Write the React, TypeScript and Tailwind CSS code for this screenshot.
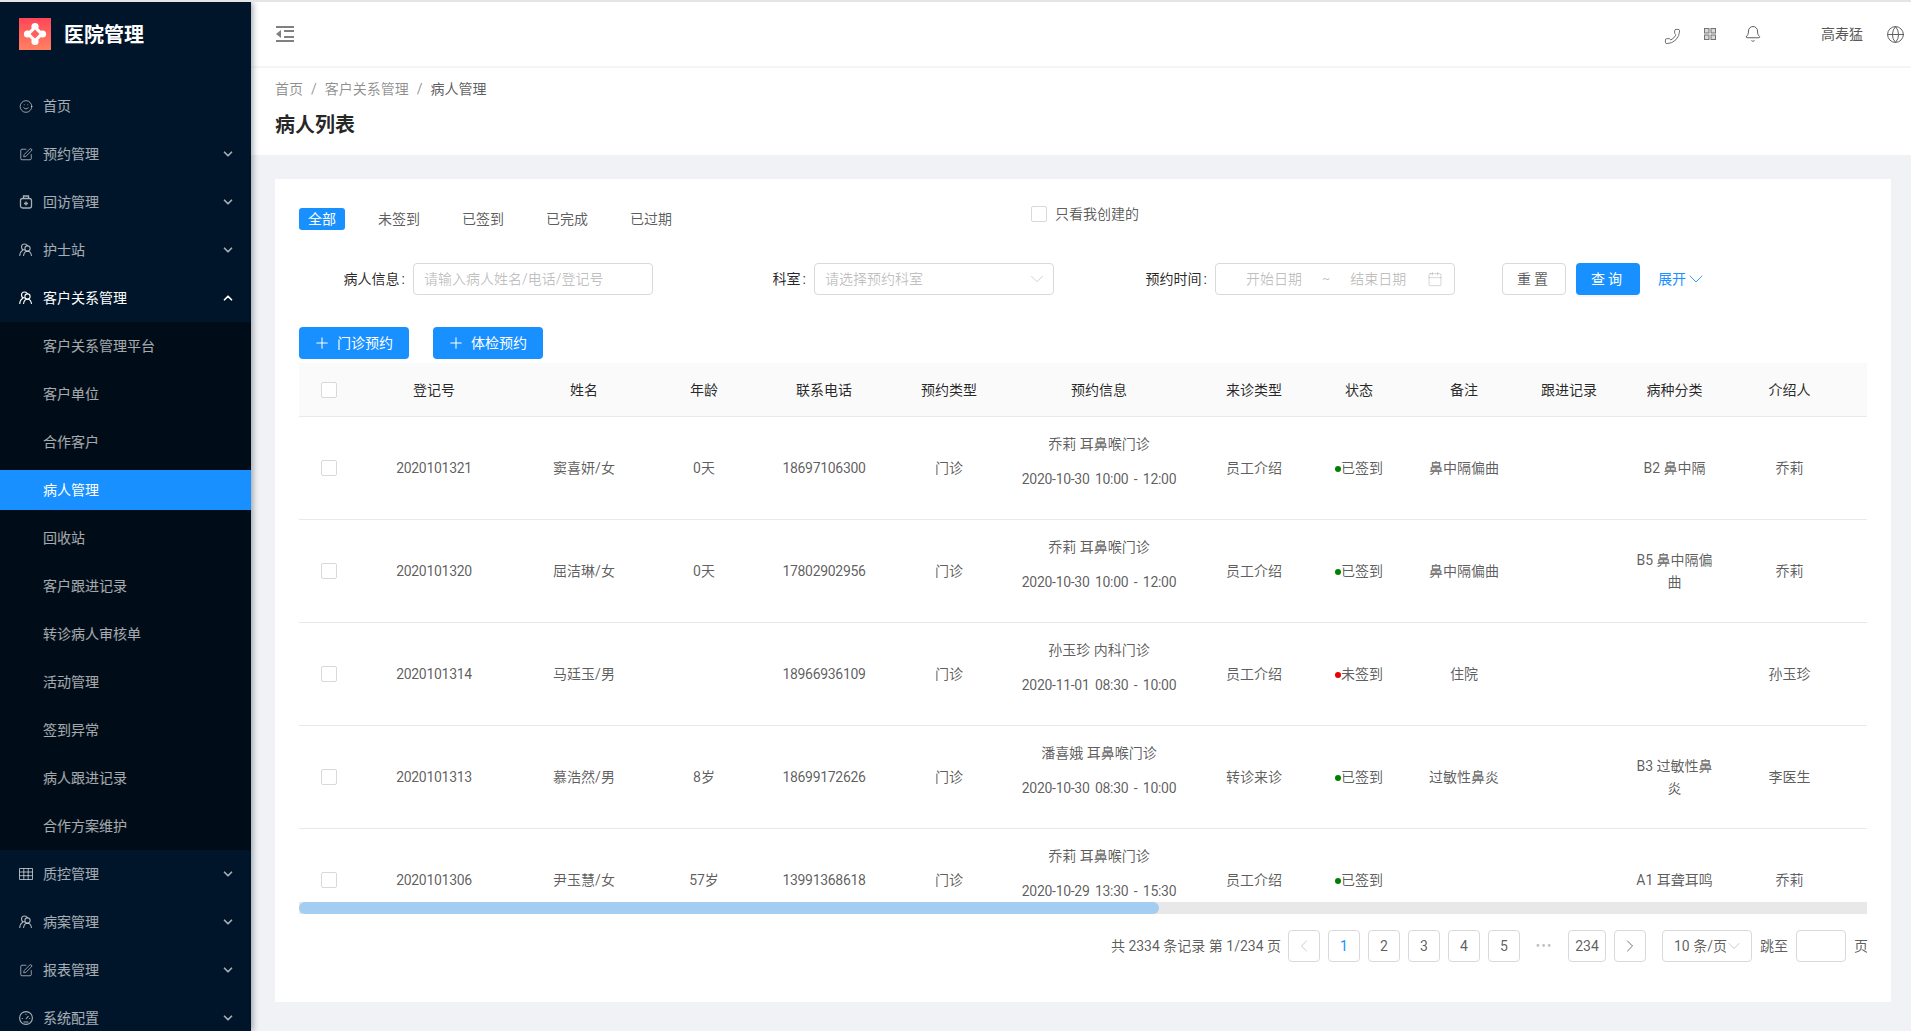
import { Bell, Calendar, ChevronDown, ChevronLeft, ChevronRight, ChevronUp, Globe, Phone, Plus, Smile, SquarePen } from "lucide-react";
import type { ReactNode } from "react";

function LogoMark() {
  return (
    <div className="w-8 h-8 bg-gradient-to-b from-[#ff4458] to-[#ff8062] flex items-center justify-center">
      <svg width="24" height="24" viewBox="0 0 24 24" fill="#fff">
        <circle cx="12" cy="4.5" r="3.6" />
        <circle cx="19.5" cy="12" r="3.6" />
        <circle cx="12" cy="19.5" r="3.6" />
        <circle cx="4.5" cy="12" r="3.6" />
        <path d="M12 3 21 12 12 21 3 12Z" />
        <path d="M12 7.5 16.5 12 12 16.5 7.5 12Z" fill="#ff5f5c" />
      </svg>
    </div>
  );
}

function UsersIcon() {
  return (
    <svg width="14" height="14" viewBox="0 0 14 14" fill="none" stroke="currentColor" strokeWidth="1.1">
      <circle cx="5.5" cy="4" r="3" />
      <path d="M.7 13c.2-3 1.600-5 3.200-6" />
      <circle cx="8.500" cy="5.500" r="2.600" fill="#001529" />
      <path d="M4.500 13c.3-2.800 2-4.800 4-4.800s3.700 2 4 4.800" />
    </svg>
  );
}

function BottleIcon() {
  return (
    <svg width="14" height="14" viewBox="0 0 14 14" fill="none" stroke="currentColor" strokeWidth="1.3">
      <path d="M4.500 3V1h5v2" />
      <rect x="1.500" y="3.500" width="11" height="9.500" rx="2" />
      <path d="M5 8.500h4M7 6.500v4" />
    </svg>
  );
}

function TableIcon() {
  return (
    <svg width="14" height="14" viewBox="0 0 14 14" fill="none" stroke="currentColor" strokeWidth="1">
      <path d="M.5 1.500h13v11H.5zM.5 5h13M.5 8.700h13M4.800 1.500v11M9.200 1.500v11" />
    </svg>
  );
}

function GaugeIcon() {
  return (
    <svg width="14" height="14" viewBox="0 0 14 14" fill="none" stroke="currentColor" strokeWidth="1.1">
      <circle cx="7" cy="7" r="6.400" />
      <path d="M2.800 7.500h1M10.200 7.500h1M7 2.800v1M7 8l2.500-3M4.500 11h5" />
    </svg>
  );
}

function FoldIcon() {
  return (
    <svg width="18" height="16" viewBox="0 0 18 16" fill="#808080">
      <rect x="0" y="0" width="18" height="2" />
      <rect x="8" y="4" width="10" height="2" />
      <rect x="8" y="10" width="10" height="2" />
      <rect x="0" y="14" width="18" height="2" />
      <path d="M5 4v8L0 8Z" />
    </svg>
  );
}

function AppsIcon() {
  return (
    <svg width="12" height="12" viewBox="0 0 12 12" fill="#d9d9d9" stroke="#737373" strokeWidth="1">
      <rect x=".5" y=".5" width="4.500" height="4.500" />
      <rect x="7" y=".5" width="4.500" height="4.500" />
      <rect x=".5" y="7" width="4.500" height="4.500" />
      <rect x="7" y="7" width="4.500" height="4.500" />
    </svg>
  );
}

const smallIcon = "w-[17px] h-[17px]";

function MenuRow({ icon, label, open, bright }: { icon: ReactNode; label: string; open?: boolean; bright?: boolean }) {
  return (
    <div className={`h-10 flex items-center pl-[19px] pr-[16px] text-sm ${bright ? "text-white" : "text-white/65"}`}>
      <span className="w-[14px] flex justify-center shrink-0">{icon}</span>
      <span className="ml-[10px] flex-1">{label}</span>
      {open === true && <ChevronUp className="w-[14px] h-[14px]" strokeWidth={3} />}
      {open === false && <ChevronDown className="w-[14px] h-[14px]" strokeWidth={3} />}
    </div>
  );
}

const subMenu = [
  "客户关系管理平台",
  "客户单位",
  "合作客户",
  "病人管理",
  "回收站",
  "客户跟进记录",
  "转诊病人审核单",
  "活动管理",
  "签到异常",
  "病人跟进记录",
  "合作方案维护",
];

function Sidebar() {
  return (
    <aside className="relative z-10 w-[251px] shrink-0 bg-[#001529] shadow-[2px_0_6px_rgba(0,21,41,0.35)]">
      <div className="h-[84px] pl-[19px] pt-4 flex items-start">
        <LogoMark />
        <span className="ml-[13px] mt-px h-8 leading-8 text-xl font-bold text-white">医院管理</span>
      </div>
      <div className="flex flex-col gap-2">
        <MenuRow icon={<Smile className={smallIcon} strokeWidth={1.5} />} label="首页" />
        <MenuRow icon={<SquarePen className={smallIcon} strokeWidth={1.5} />} label="预约管理" open={false} />
        <MenuRow icon={<BottleIcon />} label="回访管理" open={false} />
        <MenuRow icon={<UsersIcon />} label="护士站" open={false} />
        <MenuRow icon={<UsersIcon />} label="客户关系管理" open={true} bright />
      </div>
      <div className="mt-1 bg-[#000c17] py-1 flex flex-col gap-2">
        {subMenu.map((name) => (
          <div
            key={name}
            className={`h-10 flex items-center pl-[43px] text-sm ${name === "病人管理" ? "bg-[#1890ff] text-white" : "text-white/65"}`}
          >
            {name}
          </div>
        ))}
      </div>
      <div className="mt-1 flex flex-col gap-2">
        <MenuRow icon={<TableIcon />} label="质控管理" open={false} />
        <MenuRow icon={<UsersIcon />} label="病案管理" open={false} />
        <MenuRow icon={<SquarePen className={smallIcon} strokeWidth={1.5} />} label="报表管理" open={false} />
        <MenuRow icon={<GaugeIcon />} label="系统配置" open={false} />
      </div>
    </aside>
  );
}

function TopBar() {
  return (
    <header className="h-[66px] shrink-0 bg-white border-b-2 border-[#f5f5f5] flex items-center pl-[25px] pr-[6px] text-[#595959]">
      <FoldIcon />
      <div className="flex-1" />
      <Phone className="w-[17px] h-[17px] mr-[23px] mt-1 -scale-x-100" strokeWidth={1.2} />
      <span className="mr-[28px]">
        <AppsIcon />
      </span>
      <Bell className="w-[18px] h-[18px] mr-[59px]" strokeWidth={1.3} />
      <span className="text-sm mr-[23px]">高寿猛</span>
      <Globe className="w-[19px] h-[19px]" strokeWidth={1.2} />
    </header>
  );
}

function PageTitle() {
  return (
    <div className="h-[87px] shrink-0 bg-white pl-6 pt-[10px]">
      <div className="flex gap-2 text-sm leading-[22px] text-black/45">
        <span>首页</span>
        <span>/</span>
        <span>客户关系管理</span>
        <span>/</span>
        <span className="text-black/65">病人管理</span>
      </div>
      <h1 className="mt-[9px] text-xl leading-[32px] font-bold text-black/85">病人列表</h1>
    </div>
  );
}

function Check() {
  return <span className="block w-4 h-4 rounded-[2px] border border-[#d9d9d9] bg-white" />;
}

function FieldLabel({ text, width }: { text: string; width: string }) {
  return (
    <span className={`${width} text-right`}>
      {text}
      <span className="ml-[2px]">:</span>
    </span>
  );
}

function Filters() {
  return (
    <>
      <div className="flex items-start text-sm">
        <span className="w-[46px] h-[22px] rounded-[3px] bg-[#1890ff] text-white leading-[22px] text-center">全部</span>
        <div className="ml-[33px] flex gap-[42px] leading-[22px] text-black/65">
          <span>未签到</span>
          <span>已签到</span>
          <span>已完成</span>
          <span>已过期</span>
        </div>
        <label className="ml-[359px] -mt-[2px] flex items-center gap-[8px] text-black/65 h-4">
          <Check />
          只看我创建的
        </label>
      </div>

      <div className="mt-[33px] flex items-center h-8 text-sm text-black/85">
        <FieldLabel text="病人信息" width="w-[106px]" />
        <div className="ml-2 w-[240px] h-8 border border-[#d9d9d9] rounded pl-[10px] leading-[30px] text-black/25">
          请输入病人姓名/电话/登记号
        </div>
        <FieldLabel text="科室" width="w-[153px]" />
        <div className="ml-2 w-[240px] h-8 border border-[#d9d9d9] rounded pl-[10px] pr-[5px] flex items-center justify-between text-black/25">
          请选择预约科室
          <ChevronDown className="w-[22px] h-[22px]" strokeWidth={0.8} />
        </div>
        <FieldLabel text="预约时间" width="w-[153px]" />
        <div className="ml-2 w-[240px] h-8 border border-[#d9d9d9] rounded flex items-center pl-[30px] pr-[11px] text-black/25">
          <span>开始日期</span>
          <span className="ml-[20px] text-xs">~</span>
          <span className="ml-[20px] flex-1">结束日期</span>
          <Calendar className="w-4 h-4" strokeWidth={1} />
        </div>
        <button className="ml-[47px] w-16 h-8 border border-[#d9d9d9] rounded text-black/65 tracking-[3px]">重置</button>
        <button className="ml-[10px] w-16 h-8 rounded bg-[#1890ff] text-white tracking-[3px] shadow-[0_2px_0_rgba(0,0,0,0.04)]">查询</button>
        <span className="ml-[18px] text-[#1890ff] flex items-center">
          展开
          <ChevronDown className="w-6 h-6 -ml-[2px]" strokeWidth={0.9} />
        </span>
      </div>

      <div className="mt-8 flex gap-6 text-sm">
        <button className="w-[110px] h-8 rounded bg-[#1890ff] text-white flex items-center pl-[14px] gap-[6px]">
          <Plus className="w-[18px] h-[18px]" strokeWidth={1.4} />
          门诊预约
        </button>
        <button className="w-[110px] h-8 rounded bg-[#1890ff] text-white flex items-center pl-[14px] gap-[6px]">
          <Plus className="w-[18px] h-[18px]" strokeWidth={1.4} />
          体检预约
        </button>
      </div>
    </>
  );
}

const patients = [
  { no: "2020101321", name: "窦喜妍/女", age: "0天", phone: "18697106300", doctor: "乔莉 耳鼻喉门诊", time: "2020-10-30 10:00 - 12:00", visit: "员工介绍", ok: true, note: "鼻中隔偏曲", kind: "B2 鼻中隔", ref: "乔莉" },
  { no: "2020101320", name: "屈洁琳/女", age: "0天", phone: "17802902956", doctor: "乔莉 耳鼻喉门诊", time: "2020-10-30 10:00 - 12:00", visit: "员工介绍", ok: true, note: "鼻中隔偏曲", kind: "B5 鼻中隔偏曲", ref: "乔莉" },
  { no: "2020101314", name: "马廷玉/男", age: "", phone: "18966936109", doctor: "孙玉珍 内科门诊", time: "2020-11-01 08:30 - 10:00", visit: "员工介绍", ok: false, note: "住院", kind: "", ref: "孙玉珍" },
  { no: "2020101313", name: "慕浩然/男", age: "8岁", phone: "18699172626", doctor: "潘喜娥 耳鼻喉门诊", time: "2020-10-30 08:30 - 10:00", visit: "转诊来诊", ok: true, note: "过敏性鼻炎", kind: "B3 过敏性鼻炎", ref: "李医生" },
  { no: "2020101306", name: "尹玉慧/女", age: "57岁", phone: "13991368618", doctor: "乔莉 耳鼻喉门诊", time: "2020-10-29 13:30 - 15:30", visit: "员工介绍", ok: true, note: "", kind: "A1 耳聋耳鸣", ref: "乔莉" },
];

const headers = ["登记号", "姓名", "年龄", "联系电话", "预约类型", "预约信息", "来诊类型", "状态", "备注", "跟进记录", "病种分类", "介绍人"];

function PatientTable() {
  return (
    <>
      <div className="mt-1 h-[539px] overflow-hidden">
        <table className="w-[1568px] table-fixed text-sm text-center border-collapse">
          <colgroup>
            <col className="w-[60px]" />
            <col className="w-[150px]" />
            <col className="w-[150px]" />
            <col className="w-[90px]" />
            <col className="w-[150px]" />
            <col className="w-[100px]" />
            <col className="w-[200px]" />
            <col className="w-[110px]" />
            <col className="w-[100px]" />
            <col className="w-[110px]" />
            <col className="w-[100px]" />
            <col className="w-[111px]" />
            <col className="w-[119px]" />
            <col />
          </colgroup>
          <thead>
            <tr className="h-[53px] bg-[#fafafa] border-b border-[#e8e8e8] text-black/85">
              <th className="font-normal pt-px">
                <span className="flex justify-center">
                  <Check />
                </span>
              </th>
              {headers.map((h) => (
                <th key={h} className="font-normal pt-px">
                  {h}
                </th>
              ))}
              <th />
            </tr>
          </thead>
          <tbody className="text-black/65">
            {patients.map((p) => (
              <tr key={p.no} className="border-b border-[#e8e8e8] leading-[22px]">
                <td>
                  <span className="flex justify-center">
                    <Check />
                  </span>
                </td>
                <td className="px-4 tracking-[-0.3px]">{p.no}</td>
                <td className="px-4">{p.name}</td>
                <td className="px-4">{p.age}</td>
                <td className="px-4 tracking-[-0.3px]">{p.phone}</td>
                <td className="px-4">门诊</td>
                <td className="px-2 py-4">
                  <p className="mb-[13px]">{p.doctor}</p>
                  <p className="mb-[13px] tracking-[-0.3px] [word-spacing:2.3px]">{p.time}</p>
                </td>
                <td className="px-4">{p.visit}</td>
                <td>
                  <span className="inline-flex items-center">
                    <span className={`w-[6px] h-[6px] rounded-full mt-[2px] ${p.ok ? "bg-[#008000]" : "bg-[#e60000]"}`} />
                    {p.ok ? "已签到" : "未签到"}
                  </span>
                </td>
                <td className="px-4">{p.note}</td>
                <td />
                <td className="px-3">{p.kind}</td>
                <td className="px-4">{p.ref}</td>
                <td />
              </tr>
            ))}
          </tbody>
        </table>
      </div>
      <div className="h-3 bg-[#e8e8e8]">
        <div className="w-[860px] h-3 rounded-[6px] bg-[#a3cef1]" />
      </div>
    </>
  );
}

const pageBox = "h-8 border border-[#d9d9d9] rounded flex items-center justify-center";

function Pagination() {
  return (
    <div className="mt-4 -mr-px flex justify-end items-center text-sm text-black/65">
      <span className="mr-[7px]">共 2334 条记录 第 1/234 页</span>
      <div className="flex items-center gap-2">
        <span className={`${pageBox} w-8 text-black/25`}>
          <ChevronLeft className="w-5 h-5" strokeWidth={1} />
        </span>
        <span className={`${pageBox} w-8 border-[#1890ff] text-[#1890ff]`}>1</span>
        {["2", "3", "4", "5"].map((n) => (
          <span key={n} className={`${pageBox} w-8`}>
            {n}
          </span>
        ))}
        <span className="w-8 text-center text-black/25 tracking-[1px]">•••</span>
        <span className={`${pageBox} w-[38px]`}>234</span>
        <span className={`${pageBox} w-8`}>
          <ChevronRight className="w-5 h-5" strokeWidth={1} />
        </span>
      </div>
      <span className={`${pageBox} ml-4 w-[90px]`}>
        10 条/页
        <ChevronDown className="w-5 h-5 -mr-1 -ml-[3px] text-black/25" strokeWidth={1} />
      </span>
      <span className="ml-2">跳至</span>
      <span className="ml-2 w-[50px] h-8 border border-[#d9d9d9] rounded" />
      <span className="ml-2">页</span>
    </div>
  );
}

export default function App() {
  return (
    <div className="h-[1031px] overflow-hidden flex border-t-2 border-[#e5e5e5] bg-[#f0f2f5] font-['Roboto','Noto_Sans_CJK_SC',sans-serif]">
      <Sidebar />
      <main className="flex-1 min-w-0 flex flex-col">
        <TopBar />
        <PageTitle />
        <section className="mt-6 ml-6 mr-5 bg-white px-6 pt-[29px] pb-10">
          <Filters />
          <PatientTable />
          <Pagination />
        </section>
      </main>
    </div>
  );
}
